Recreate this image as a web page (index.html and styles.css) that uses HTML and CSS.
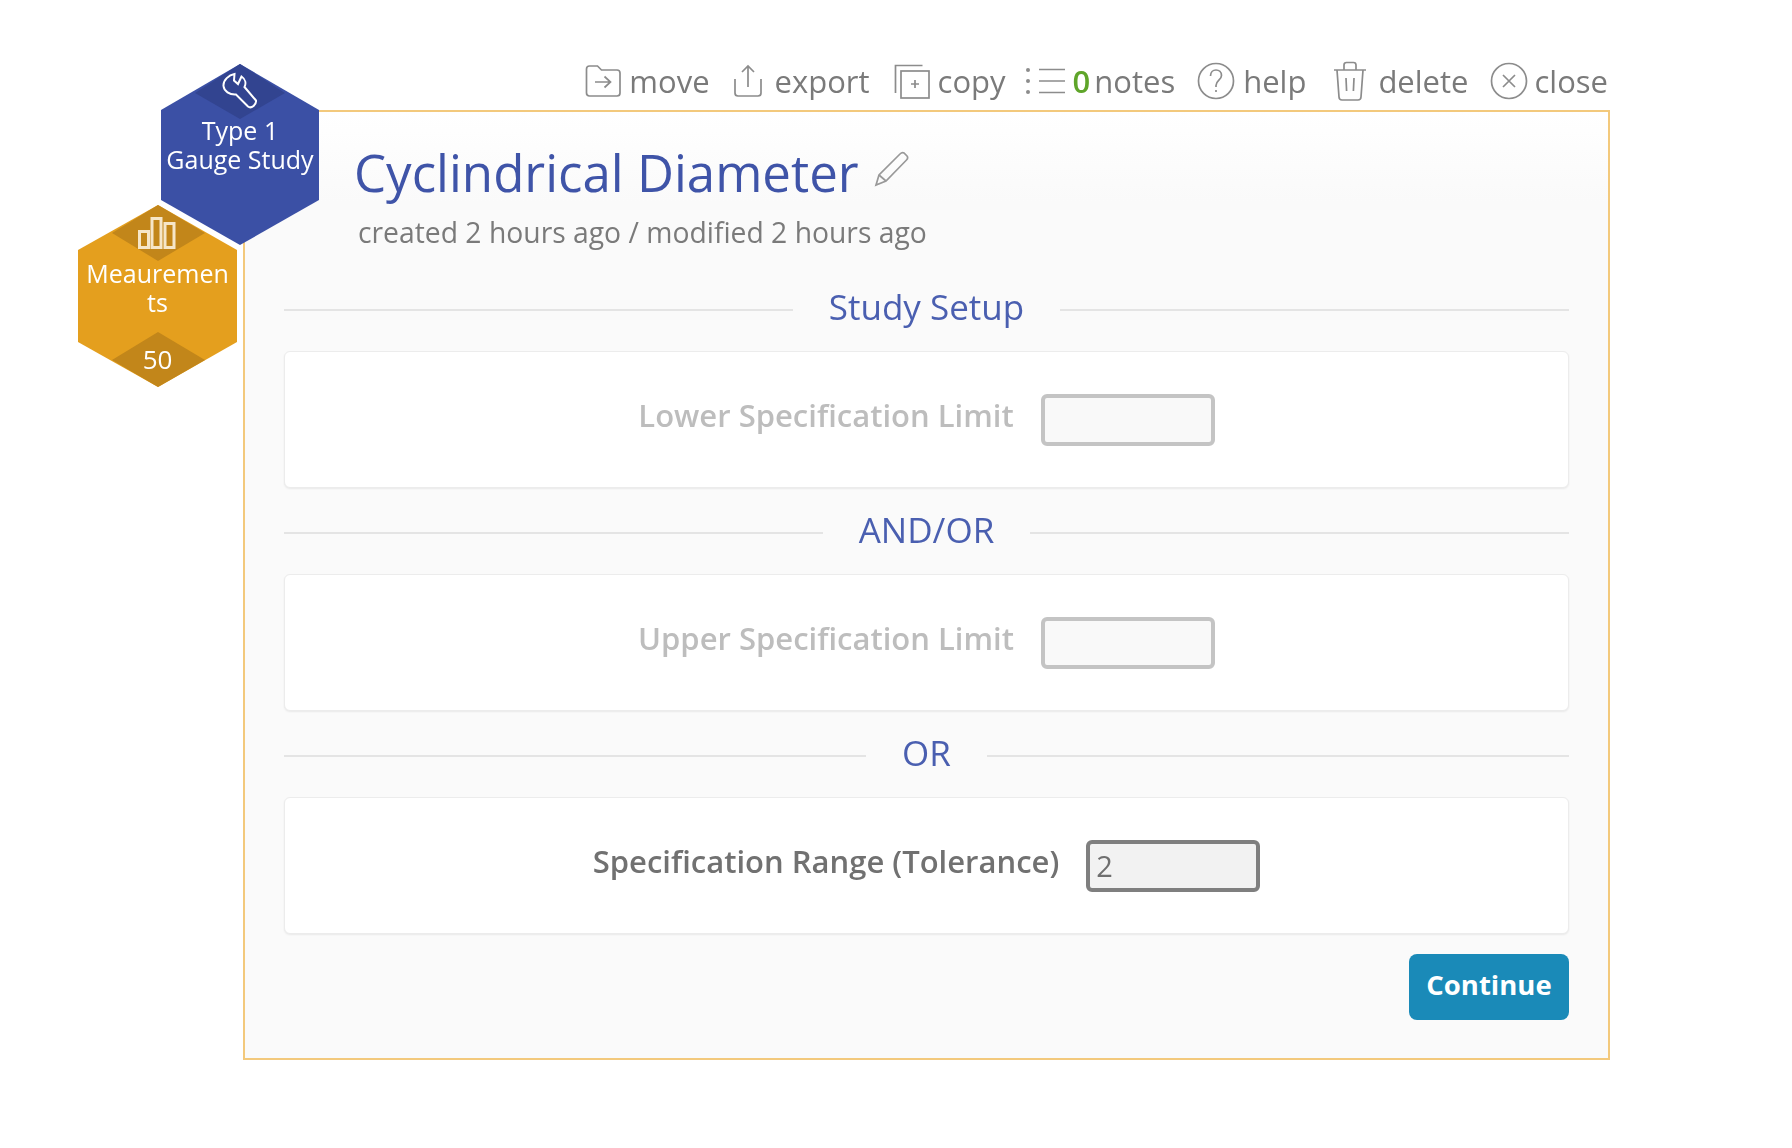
FILE: index.html
```html
<!DOCTYPE html>
<html lang="en">
<head>
<meta charset="utf-8">
<title>Cyclindrical Diameter</title>
<link rel="stylesheet" href="styles.css">
</head>
<body>
<div class="page">
  <nav class="toolbar">
    <a class="tool tool-move"><svg class="ic" width="36" height="34" viewBox="0 0 36 34"><path d="M1.500 5q0-3 3-3h8l4 4h15.500q3 0 3 3v20q0 3-3 3h-27.500q-3 0-3-3z"/><path d="M10 18h15M19.500 12.500l6 5.500-6 5.500"/></svg><span>move</span></a>
    <a class="tool tool-export"><svg class="ic" width="30" height="34" viewBox="0 0 30 34"><path d="M2 15v14q0 3 3 3h20q3 0 3-3v-14"/><path d="M15 23V2M9 8l6-6 6 6"/></svg><span>export</span></a>
    <a class="tool tool-copy"><svg class="ic" width="36" height="35" viewBox="0 0 36 35"><path d="M1.500 29V1.500h27"/><rect x="7" y="7" width="28" height="27"/><path d="M21 16v8M17 20h8"/></svg><span>copy</span></a>
    <a class="tool tool-notes"><svg class="ic" width="40" height="28" viewBox="0 0 40 28"><circle class="dot" cx="3" cy="3" r="2"/><circle class="dot" cx="3" cy="14" r="2"/><circle class="dot" cx="3" cy="25" r="2"/><path d="M14 2.500h26M14 14h26M14 25.500h26"/></svg><span class="count">0</span><span>notes</span></a>
    <a class="tool tool-help"><svg class="ic" width="38" height="38" viewBox="0 0 38 38"><circle cx="19" cy="19" r="17.500"/><path d="M13.500 14c0-4 2.500-6 5.500-6s5.500 2 5.500 5.500c0 4.500-5.500 5-5.500 10v1.500"/><path d="M19 28v2"/></svg><span>help</span></a>
    <a class="tool tool-delete"><svg class="ic" width="34" height="40" viewBox="0 0 34 40"><path d="M1 9h32M11 9V4q0-2.500 2.500-2.500h7q2.500 0 2.500 2.500v5"/><path d="M4 9l2 27q.2 3 3 3h16q2.800 0 3-3l2-27"/><path d="M13 17l.6 13M21 17l-.6 13"/></svg><span>delete</span></a>
    <a class="tool tool-close"><svg class="ic" width="38" height="38" viewBox="0 0 38 38"><circle cx="19" cy="19" r="17.500"/><path d="M13 13l12 12M25 13L13 25"/></svg><span>close</span></a>
  </nav>

  <main class="panel">
    <header class="head">
      <h1 class="title"><span>Cyclindrical Diameter</span>
        <svg class="pencil" width="36" height="36" viewBox="0 0 36 36"><path d="M2 34l3-10L26 3q2-2 4-1l3 3q1.500 2-.5 4L12 30z"/><path d="M5 24l7 6"/></svg>
      </h1>
      <p class="dates">created 2 hours ago / modified 2 hours ago</p>
    </header>

    <h2 class="divider"><span>Study Setup</span></h2>
    <section class="box is-off">
      <label class="field-label">Lower Specification Limit</label>
      <input class="field" type="text" disabled>
    </section>

    <h2 class="divider"><span>AND/OR</span></h2>
    <section class="box is-off">
      <label class="field-label">Upper Specification Limit</label>
      <input class="field" type="text" disabled>
    </section>

    <h2 class="divider"><span>OR</span></h2>
    <section class="box">
      <label class="field-label">Specification Range (Tolerance)</label>
      <input class="field" type="text" value="2">
    </section>

    <div class="actions"><button class="continue" type="button">Continue</button></div>
  </main>

  <div class="hex hex-study">
    <svg class="hex-bg" width="158" height="181" viewBox="0 0 158 181">
      <polygon fill="#3b50a5" points="79,0 158,46 158,136 79,181 0,136 0,46"/>
      <polygon fill="#324490" points="79,0 124,29 79,55 34,29"/>
    </svg>
    <svg class="hex-ic wrench" width="36" height="37" viewBox="0 0 36 37"><path d="M12.500 2C7 3 1 8 1.500 14c.5 5 6 9 12.500 8.500L26 34.500q2.500 2 5.500-.5t2.500-5.500L22.500 15c1.500-3 1.500-7.500-3-10.500L16 12l-4-3.500z"/></svg>
    <div class="hex-text">Type 1<br>Gauge Study</div>
  </div>

  <div class="hex hex-meas">
    <svg class="hex-bg" width="159" height="182" viewBox="0 0 159 182">
      <polygon fill="#e49f1e" points="80,0 159,45 159,137 80,182 0,137 0,45"/>
      <polygon fill="#c2861a" points="80,0 127,28 80,56 34,28"/>
      <polygon fill="#c2861a" points="80,127 127,155 80,182 34,155"/>
    </svg>
    <svg class="hex-ic bars" width="38" height="32" viewBox="0 0 38 32"><rect x="1.500" y="14.500" width="9" height="16"/><rect x="14" y="1.500" width="9" height="29"/><rect x="27" y="6.500" width="9" height="24"/></svg>
    <div class="hex-text">Meauremen<br>ts</div>
    <div class="hex-count">50</div>
  </div>
</div>
</body>
</html>
```

FILE: styles.css
```css
* { box-sizing: border-box; }
html, body { margin: 0; background: #fff; }
body { font-family: "Open Sans", "Liberation Sans", sans-serif; color: #777; }

.page {
  position: relative;
  width: 1792px;
  height: 1148px;
  padding: 61px 0 0 243px;
  filter: blur(0.6px);
}

/* toolbar */
.toolbar {
  display: flex;
  justify-content: flex-end;
  align-items: center;
  width: 1365px;
  height: 40px;
  gap: 22px;
  margin-bottom: 9px;
  font-size: 31px;
  color: #7a7a7a;
}
.tool { display: flex; align-items: center; gap: 8px; white-space: nowrap; }
.ic { fill: none; stroke: #8c8c8c; stroke-width: 1.700; flex: none; }
.ic .dot { fill: #8c8c8c; stroke: none; }
.count { color: #5fa52a; font-weight: 600; margin: 0 -2px 0 2px; }
.tool-export { margin-left: 1px; gap: 12px; }
.tool-copy { margin-left: 2px; }
.tool-notes { margin-left: -3px; gap: 6px; }
.tool-delete { margin-left: 5px; gap: 11px; }
.tool-close { gap: 6px; }

/* panel */
.panel {
  width: 1367px;
  height: 950px;
  padding: 0 39px 39px;
  border: 2px solid #f3c97c;
  background: linear-gradient(#fff, #fafafa 90px);
}
.head { height: 153px; padding: 23px 0 0 70px; }
.title {
  display: flex;
  align-items: center;
  gap: 15px;
  margin: 0;
  height: 74px;
  font-size: 51px;
  font-weight: 400;
  color: #3f54a8;
  line-height: 74px;
}
.pencil { fill: none; stroke: #999; stroke-width: 1.700; margin-top: -6px; }
.dates { margin: 3px 0 0 4px; font-size: 28.300px; line-height: 40px; color: #7a7a7a; }

.divider {
  display: flex;
  align-items: center;
  height: 86px;
  margin: 0;
  font-size: 35px;
  font-weight: 400;
  color: #4a5fb0;
  gap: 36px;
}
.divider::before, .divider::after {
  content: "";
  flex: 1;
  height: 2px;
  margin-top: 4px;
  background: #e4e4e4;
}
.divider span { line-height: 1; margin-top: -4px; }

.box {
  display: flex;
  justify-content: center;
  align-items: center;
  gap: 27px;
  height: 137px;
  background: #fff;
  border: 1px solid #ececec;
  border-radius: 6px;
  box-shadow: 0 1px 2px rgba(0,0,0,.07);
}
.field-label { font-size: 31px; font-weight: 600; color: #717171; margin-top: -9px; }
.field {
  width: 174px;
  height: 52px;
  padding: 0 6px;
  border: 4px solid #7f7f7f;
  border-radius: 6px;
  background: #f2f2f2;
  font: 29px "Open Sans", sans-serif;
  color: #6f6f6f;
  outline: 0;
}
.is-off .field-label { color: #bdbdbd; }
.is-off .field { border-color: #c4c4c4; background: #f9f9f9; }

.actions { display: flex; justify-content: flex-end; margin-top: 20px; }
.continue {
  width: 160px;
  height: 66px;
  padding: 0 0 6px;
  border: 0;
  border-radius: 8px;
  background: #1a8ab8;
  color: #fff;
  font: 700 27.500px "Open Sans", sans-serif;
}

/* hexagons */
.hex { position: absolute; color: #fff; text-align: center; }
.hex-bg { position: absolute; left: 0; top: 0; }
.hex-study { left: 161px; top: 64px; width: 158px; height: 181px; }
.hex-meas { left: 78px; top: 205px; width: 159px; height: 182px; }
.hex-ic { position: absolute; fill: none; stroke: #fff; }
.wrench { left: 61px; top: 8px; stroke-width: 2; }
.bars { left: 60px; top: 12px; stroke: #f6e6c8; stroke-width: 3; }
.hex-text { position: absolute; left: 0; right: 0; font-size: 25px; line-height: 29px; white-space: nowrap; }
.hex-study .hex-text { top: 52px; }
.hex-meas .hex-text { top: 54px; }
.hex-count { position: absolute; left: 0; right: 0; top: 136px; font-size: 26px; line-height: 36px; font-weight: 500; }
```
